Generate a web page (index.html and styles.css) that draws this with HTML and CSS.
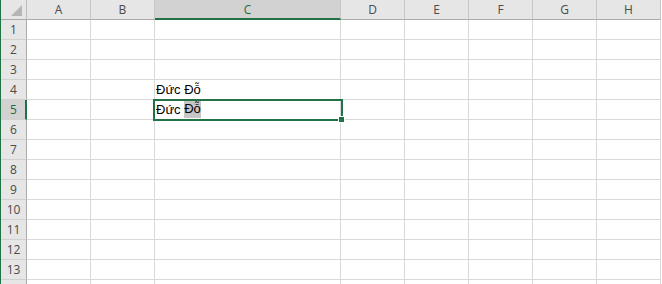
FILE: index.html
```html
<!DOCTYPE html>
<html lang="en">
<head>
    <meta charset="UTF-8">
    <title>Sheet1</title>
    <link rel="stylesheet" href="styles.css">
</head>
<body>
    <div class="sheet-wrap">
        <div class="sheet" id="sheet">
            <div class="corner"><span class="corner-tri"></span></div>
            <div class="col-head">A</div>
            <div class="col-head">B</div>
            <div class="col-head active">C</div>
            <div class="col-head">D</div>
            <div class="col-head">E</div>
            <div class="col-head">F</div>
            <div class="col-head">G</div>
            <div class="col-head">H</div>
        </div>

        <!-- selection box over C5 -->
        <div class="selection"><span class="fill-handle"></span></div>
    </div>

    <script>
        // Build the rows of the grid
        const sheet = document.getElementById('sheet');
        const cols = ['A', 'B', 'C', 'D', 'E', 'F', 'G', 'H'];
        const values = {
            'C4': 'Đức Đỗ',
            'C5': '<span>Đức </span><span class="edit-sel">Đỗ</span>'
        };

        for (let r = 1; r <= 14; r++) {
            const head = document.createElement('div');
            head.className = 'row-head' + (r === 5 ? ' active' : '');
            // row 14 only peeks in at the bottom edge, its number is not visible
            head.textContent = r < 14 ? r : '';
            sheet.appendChild(head);

            cols.forEach(function(c) {
                const cell = document.createElement('div');
                cell.className = 'cell';
                const key = c + r;
                if (values[key]) {
                    cell.innerHTML = values[key];
                }
                sheet.appendChild(cell);
            });
        }
    </script>
</body>
</html>
```

FILE: styles.css
```css
body {
    margin: 0;
    background-color: #ffffff;
    overflow: hidden;
}

.sheet-wrap {
    position: relative;
    width: 662px;
    height: 284px;
    overflow: hidden;
}

.sheet {
    display: grid;
    grid-template-columns: 26px 64px 64px 186px 64px 64px 64px 64px 64px;
    grid-auto-rows: 20px;
    width: 661px;
    border-left: 1px solid #217346;
}

.corner,
.col-head,
.row-head,
.cell {
    box-sizing: border-box;
}

.corner {
    position: relative;
    background-color: #e6e6e6;
    border-right: 1px solid #bcbcbc;
    border-bottom: 1px solid #ababab;
}

.corner-tri {
    position: absolute;
    right: 4px;
    bottom: 3px;
    width: 0;
    height: 0;
    border-left: 11px solid transparent;
    border-bottom: 11px solid #b5b5b5;
}

.col-head {
    display: flex;
    justify-content: center;
    align-items: center;
    background-color: #e6e6e6;
    border-right: 1px solid #c6c6c6;
    border-bottom: 1px solid #ababab;
    font-family: "Open Sans", "Noto Sans", sans-serif;
    font-size: 12px;
    color: #4a4a4a;
    user-select: none;
}

.col-head.active {
    background-color: #d2d2d2;
    color: #1e6b40;
    border-bottom: 2px solid #217346;
    padding-top: 1px;
}

.row-head {
    display: flex;
    justify-content: center;
    align-items: center;
    background-color: #e6e6e6;
    border-right: 1px solid #ababab;
    border-bottom: 1px solid #d0d0d0;
    font-family: "Open Sans", "Noto Sans", sans-serif;
    font-size: 12px;
    color: #4a4a4a;
    user-select: none;
}

.row-head.active {
    background-color: #d2d2d2;
    color: #1e6b40;
    border-right: 2px solid #217346;
    padding-left: 1px;
}

.cell {
    display: flex;
    align-items: flex-end;
    padding: 0 0 1px 1px;
    border-right: 1px solid #d9d9d9;
    border-bottom: 1px solid #d9d9d9;
    font-family: "Liberation Sans", Arial, sans-serif;
    font-size: 13px;
    line-height: 16px;
    color: #000000;
    white-space: pre;
}

.edit-sel {
    background-color: #c6c6c6;
    padding: 1px 0;
}

.selection {
    position: absolute;
    left: 153px;
    top: 99px;
    width: 190px;
    height: 22px;
    box-sizing: border-box;
    border: 2px solid #217346;
    pointer-events: none;
}

.fill-handle {
    position: absolute;
    right: -4px;
    bottom: -4px;
    width: 5px;
    height: 5px;
    background-color: #217346;
    border: 1px solid #ffffff;
}
```
